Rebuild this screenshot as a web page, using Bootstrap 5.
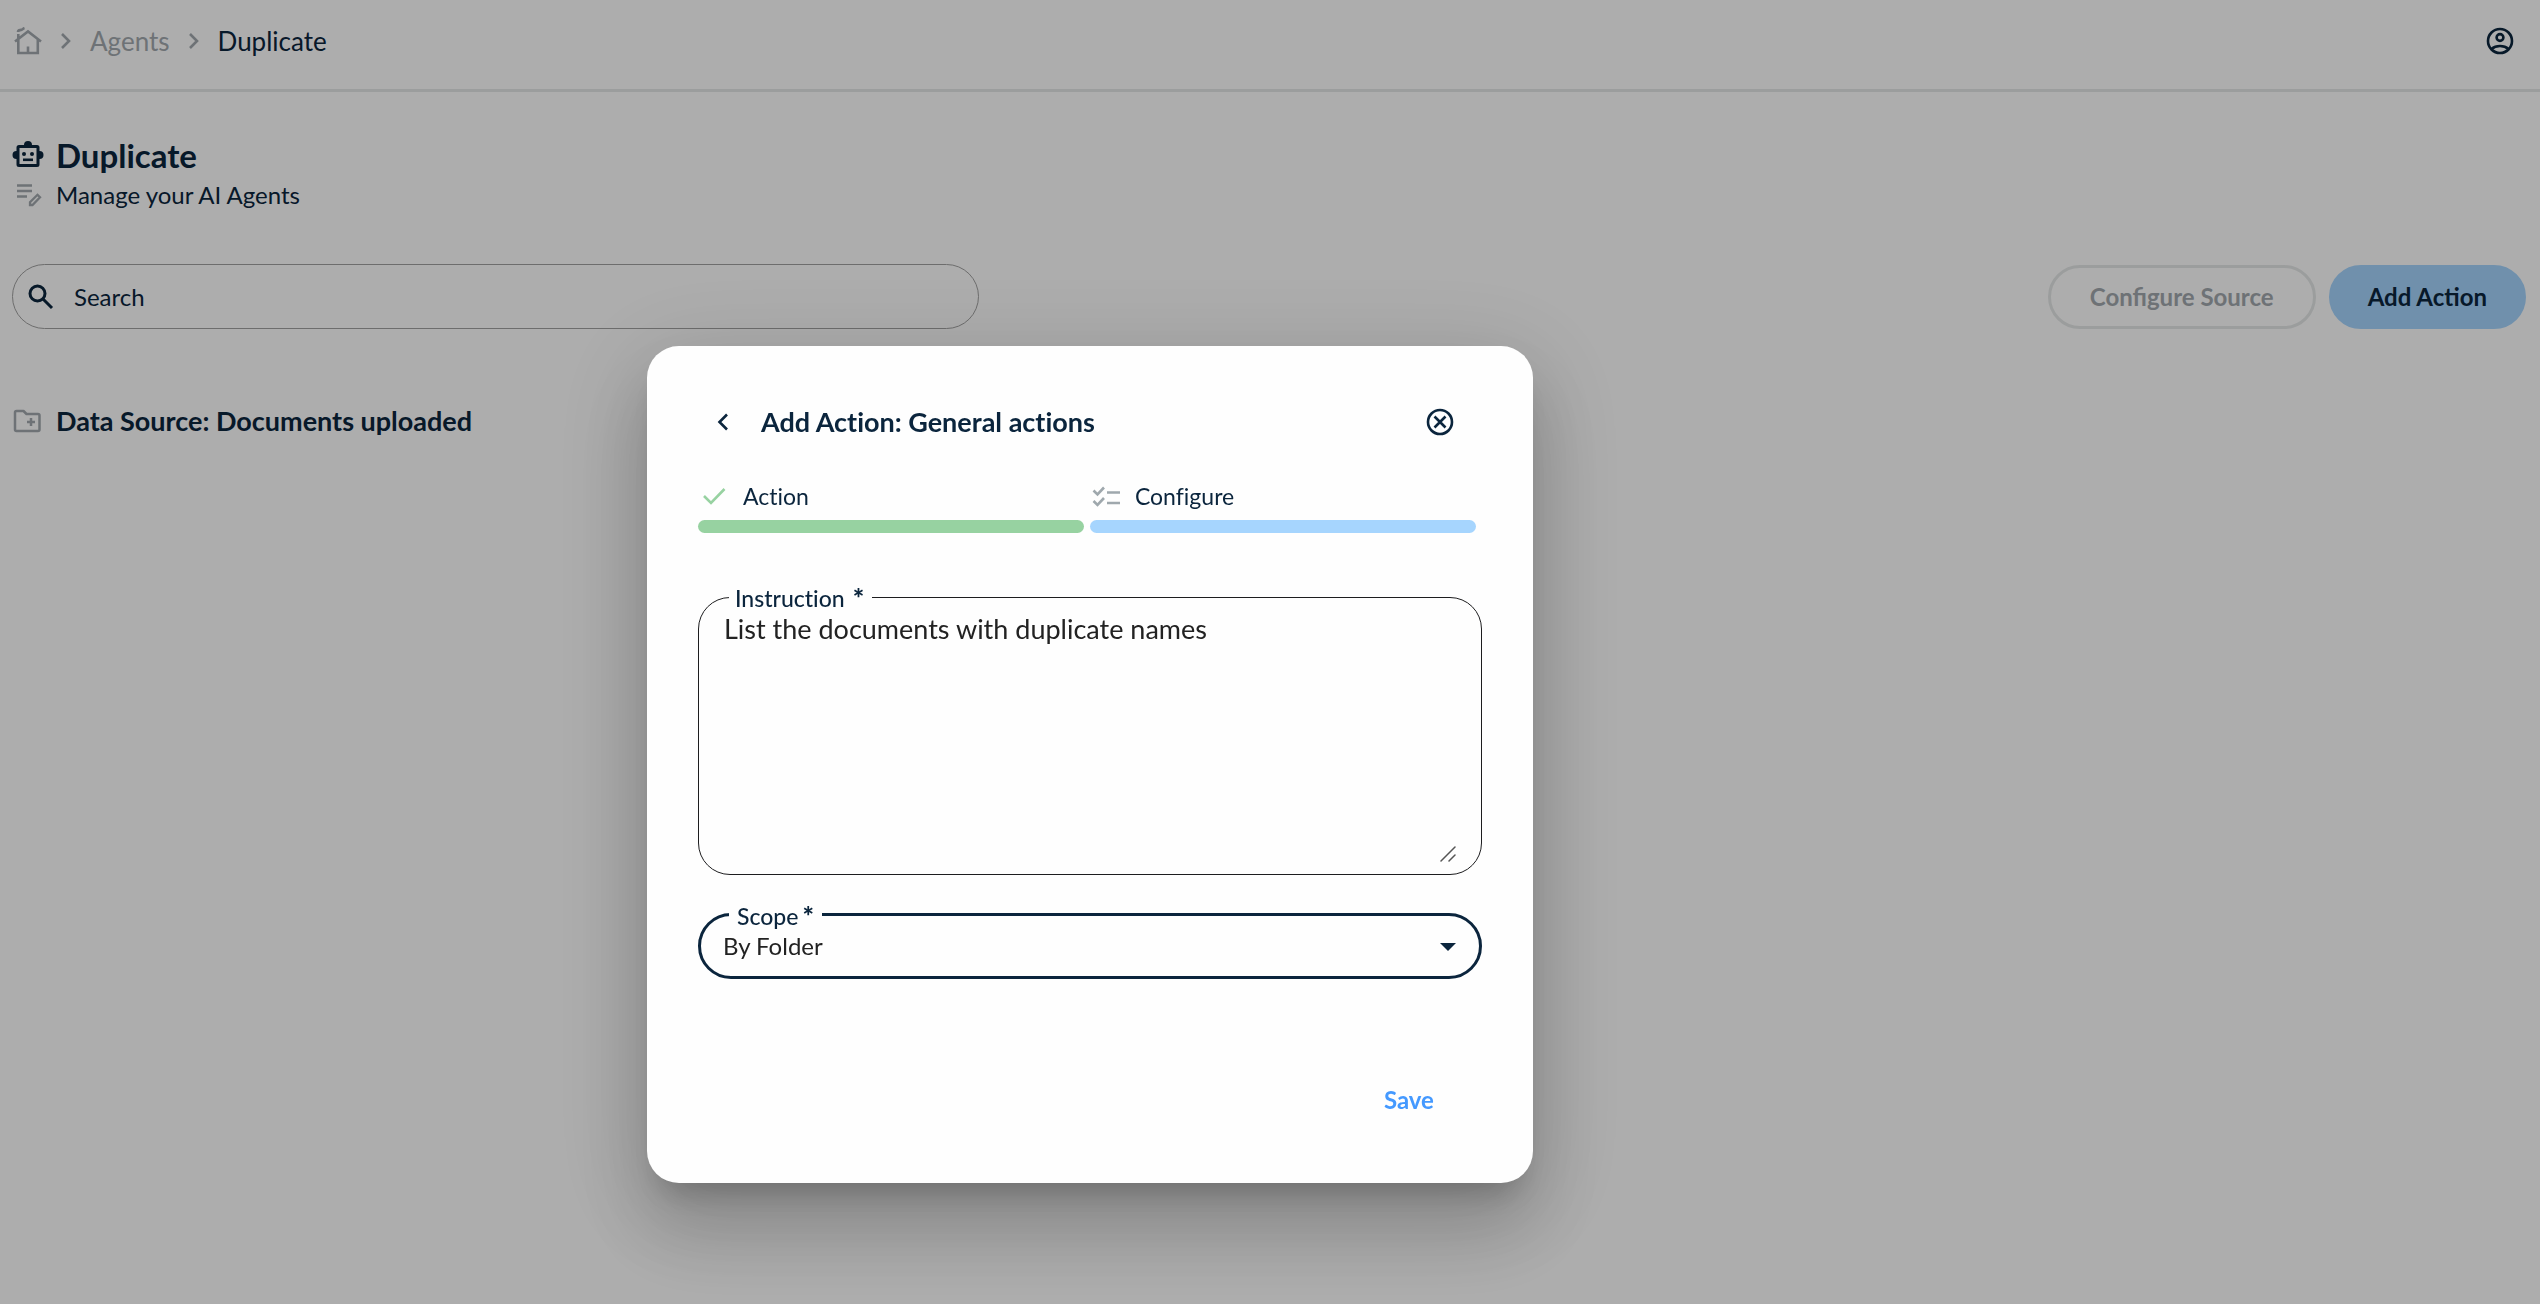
<!DOCTYPE html>
<html lang="en">
<head>
<meta charset="utf-8">
<meta name="viewport" content="width=device-width, initial-scale=1">
<title>Duplicate</title>
<link href="https://cdn.jsdelivr.net/npm/bootstrap@5.3.0/dist/css/bootstrap.min.css" rel="stylesheet">
<style>
  :root { --navy: #0b253d; --muted-ink: #a2a9ae; --sky: #a6d5fe; --leaf: #97d2a1; --rule: #e5e8e8; }
  body { font-family: Lato, "Open Sans", sans-serif; color: var(--navy); background: #fff; font-size: 24px; line-height: 32px; font-variant-ligatures: none; }
  svg { display: block; flex: none; }
  .topbar { height: 92px; padding: 0 26px 8px 14px; border-bottom: 3px solid var(--rule); }
  .crumbs { font-size: 26px; gap: 18px; --bs-breadcrumb-divider: ""; }
  .crumbs a, .soft { color: var(--muted-ink); }
  .page-main { padding: 43px 14px 0 12px; }
  .line { gap: 12px; }
  .page-title { font-size: 33px; line-height: 40px; font-weight: 700; }
  .tools { margin-top: 53px; }
  .search { width: 967px; max-width: 60%; height: 65px; border: 1px solid #a1a1a1; border-radius: 33px; padding: 0 15px; gap: 20px; }
  .search .form-control { font-size: 24px; color: var(--navy); }
  .search .form-control::placeholder { color: var(--navy); opacity: 1; }
  .pill { height: 64px; border-radius: 32px; font-size: 24px; font-weight: 700; line-height: 32px; padding: 0 39px; border-width: 3px; }
  .pill-line { border-color: var(--rule); color: var(--muted-ink); }
  .pill-fill, .pill-fill:hover { background: var(--sky); border-color: var(--sky); color: var(--navy); padding: 0 36px; }
  .source { font-size: 27px; font-weight: 700; margin-top: 76px; line-height: 32px; }
  .veil { background: rgba(0, 0, 0, .32); overflow: hidden; }
  .veil .modal-dialog { max-width: 886px; margin: 346px 0 0 25.47%; }
  .sheet { border: 0; border-radius: 32px; background: #fefefe; color: var(--navy); padding: 56px 51px 59px;
    box-shadow: 0 22px 30px -14px rgba(0,0,0,.2), 0 48px 76px 6px rgba(0,0,0,.14), 0 18px 92px 16px rgba(0,0,0,.12); }
  .sheet-head { height: 40px; padding: 0 26px 0 14px; gap: 21px; }
  .sheet-head h2 { font-size: 27px; font-weight: 700; line-height: 32px; }
  .steps { margin: 38px 6px 0 0; gap: 6px; font-size: 23px; }
  .step-bar { height: 13px; border-radius: 7px; margin-top: 8px; }
  .step-name { gap: 14px; padding-left: 1px; }
  .outlined { position: relative; }
  .outlined label { position: absolute; left: 31px; top: -15px; z-index: 1; display: flex; background: #fefefe; padding: 0 8px 0 6px; font-size: 23px; font-weight: 500; line-height: 32px; }
  .outlined label b { font-size: 27px; font-weight: 900; margin-left: 8px; }
  .note { margin-top: 64px; }
  .note textarea { height: 278px; border: 1px solid #1d1d1f; border-radius: 32px; padding: 14px 25px; font-size: 27px; line-height: 34px; color: #222; resize: none; background: #fefefe; }
  .grip { position: absolute; right: 26px; bottom: 13px; }
  .scope { margin-top: 38px; }
  .outlined.scope label { top: -13px; padding-left: 8px; }
  .outlined.scope label b { margin-left: 4px; }
  .scope select { height: 66px; border: 3px solid var(--navy); border-radius: 33px; padding: 0 24px 0 22px; font-size: 24px; color: #222; background: #fefefe; }
  .caret { position: absolute; right: 26px; top: 30px; pointer-events: none; }
  .save { margin-top: 97px; height: 48px; font-size: 24px; line-height: 32px; font-weight: 700; color: #4499ff; padding: 0 25px; margin-right: 23px; border: 0; }
</style>
</head>
<body>
<header class="topbar d-flex align-items-center justify-content-between">
  <nav aria-label="breadcrumb">
    <ol class="crumbs breadcrumb d-flex align-items-center mb-0">
      <li><a href="#" aria-label="Home"><svg width="28" height="28" viewBox="0 0 28 28" fill="none" stroke="currentColor" stroke-width="2.6"><path d="M1 14.5 14 4.500 27 14.500M4.300 12V26H23.800V12M4.300 12V7M14 26V19.500"/><path d="M4 5C4 2.500 6 3.500 7.500 2.800S9 1.500 10.500 1"/></svg></a></li>
      <li class="soft"><svg width="12" height="18" viewBox="0 0 12 18" fill="none" stroke="currentColor" stroke-width="2.6"><path d="M2 2l7 7-7 7"/></svg></li>
      <li><a href="#" class="text-decoration-none">Agents</a></li>
      <li class="soft"><svg width="12" height="18" viewBox="0 0 12 18" fill="none" stroke="currentColor" stroke-width="2.6"><path d="M2 2l7 7-7 7"/></svg></li>
      <li aria-current="page">Duplicate</li>
    </ol>
  </nav>
  <button type="button" class="btn p-0 border-0" aria-label="Account"><svg width="28" height="28" viewBox="0 0 28 28" fill="none" stroke="#0b253d" stroke-width="2.6"><circle cx="14" cy="14" r="12"/><circle cx="14" cy="10.5" r="3.4"/><path d="M5.500 22C10 18 18 18 22.500 22"/></svg></button>
</header>

<main class="page-main">
  <div class="line d-flex align-items-center">
    <svg width="32" height="28" viewBox="-1 0 32 28" fill="#0b253d"><path fill-rule="evenodd" d="M11 4a4 4 0 0 1 8 0h5a2.500 2.500 0 0 1 2.500 2.500V10a4 4 0 0 1 0 8v5.500A2.500 2.500 0 0 1 24 26H6a2.500 2.500 0 0 1-2.500-2.500V18a4 4 0 0 1 0-8V6.500A2.500 2.500 0 0 1 6 4zM6.500 7v16h17V7z"/><circle cx="11" cy="13" r="2"/><circle cx="19" cy="13" r="2"/><path d="M10 17.500h10v2.600H10z"/></svg>
    <h1 class="page-title mb-0">Duplicate</h1>
  </div>
  <div class="line d-flex align-items-center mt-1">
    <svg class="soft" width="32" height="24" viewBox="-1 0 32 24" fill="none" stroke="currentColor" stroke-width="2.5"><path d="M4 2.500H19M4 8H19M4 13.500H14"/><path d="M17 22v-2.700l7.500-7.500 2.500 2.500L19.500 22z" stroke-width="2.3"/></svg>
    <p class="mb-0">Manage your AI Agents</p>
  </div>

  <div class="tools d-flex align-items-center justify-content-between">
    <div class="search d-flex align-items-center">
      <svg width="26" height="26" viewBox="0 0 26 26" fill="none" stroke="#0b253d" stroke-width="3"><circle cx="9.5" cy="9.5" r="7.5"/><path d="M15 15l9 9"/></svg>
      <input type="search" class="form-control border-0 p-0 bg-transparent shadow-none" placeholder="Search" aria-label="Search">
    </div>
    <div class="d-flex" style="gap:13px">
      <button type="button" class="btn pill pill-line">Configure Source</button>
      <button type="button" class="btn pill pill-fill">Add Action</button>
    </div>
  </div>

  <div class="line source d-flex align-items-center">
    <svg class="soft" width="32" height="24" viewBox="-1 0 32 24" fill="none" stroke="currentColor" stroke-width="2.5" stroke-linejoin="round"><path d="M2 3.500Q2 2 3.500 2H10.500L13.500 5H25Q26.500 5 26.500 6.500V20.500Q26.500 22 25 22H3.500Q2 22 2 20.500z"/><path d="M18 9v8M14 13h8"/></svg>
    <span>Data Source: Documents uploaded</span>
  </div>
</main>

<div class="veil modal d-block" role="dialog" aria-modal="true" aria-labelledby="sheetTitle">
  <div class="modal-dialog">
    <form class="modal-content sheet">
      <div class="sheet-head d-flex align-items-center">
        <button type="button" class="btn p-0 border-0" aria-label="Back"><svg width="28" height="20" viewBox="0 0 28 20" fill="none" stroke="#0b253d" stroke-width="2.6"><path d="M15 2.500L7.500 10l7.500 7.500"/></svg></button>
        <h2 id="sheetTitle" class="mb-0">Add Action: General actions</h2>
        <button type="button" class="btn p-0 border-0 ms-auto" aria-label="Close"><svg width="32" height="28" viewBox="0 0 32 28" fill="none" stroke="#0b253d" stroke-width="2.6"><circle cx="16" cy="14" r="12"/><path d="M10.500 8.500l11 11M21.500 8.500l-11 11"/></svg></button>
      </div>

      <div class="steps d-flex">
        <div class="flex-fill w-50">
          <div class="step-name d-flex align-items-center"><svg width="30" height="20" viewBox="0 0 30 20" fill="none" stroke="#97d2a1" stroke-width="2.6"><path d="M5 10l7 7L25.500 3"/></svg><span>Action</span></div>
          <div class="step-bar" style="background:var(--leaf)"></div>
        </div>
        <div class="flex-fill w-50">
          <div class="step-name d-flex align-items-center"><svg width="30" height="22" viewBox="0 0 30 22" fill="none" stroke="#9fa8ad" stroke-width="2.6"><path d="M2.500 5.500l4 4L13 2.500M2.500 16l4 4L13 13M16 7.500h13M16 18h13"/></svg><span>Configure</span></div>
          <div class="step-bar" style="background:var(--sky)"></div>
        </div>
      </div>

      <div class="outlined note">
        <label for="instruction">Instruction <b>*</b></label>
        <textarea id="instruction" class="d-block w-100 shadow-none" required>List the documents with duplicate names</textarea>
        <svg class="grip" width="16" height="16" viewBox="0 0 16 16" stroke="#555" stroke-width="1.5" stroke-linecap="round"><path d="M1 15L15 1M9 15l6-6"/></svg>
      </div>

      <div class="outlined scope">
        <label for="scope">Scope <b>*</b></label>
        <select id="scope" class="form-select shadow-none"><option>By Folder</option></select>
        <svg class="caret" width="16" height="8" viewBox="0 0 16 8" fill="#0b253d"><path d="M0 0h16L8 8z"/></svg>
      </div>

      <button type="submit" class="btn save align-self-end">Save</button>
    </form>
  </div>
</div>
<script src="https://cdn.jsdelivr.net/npm/bootstrap@5.3.0/dist/js/bootstrap.bundle.min.js"></script>
</body>
</html>
